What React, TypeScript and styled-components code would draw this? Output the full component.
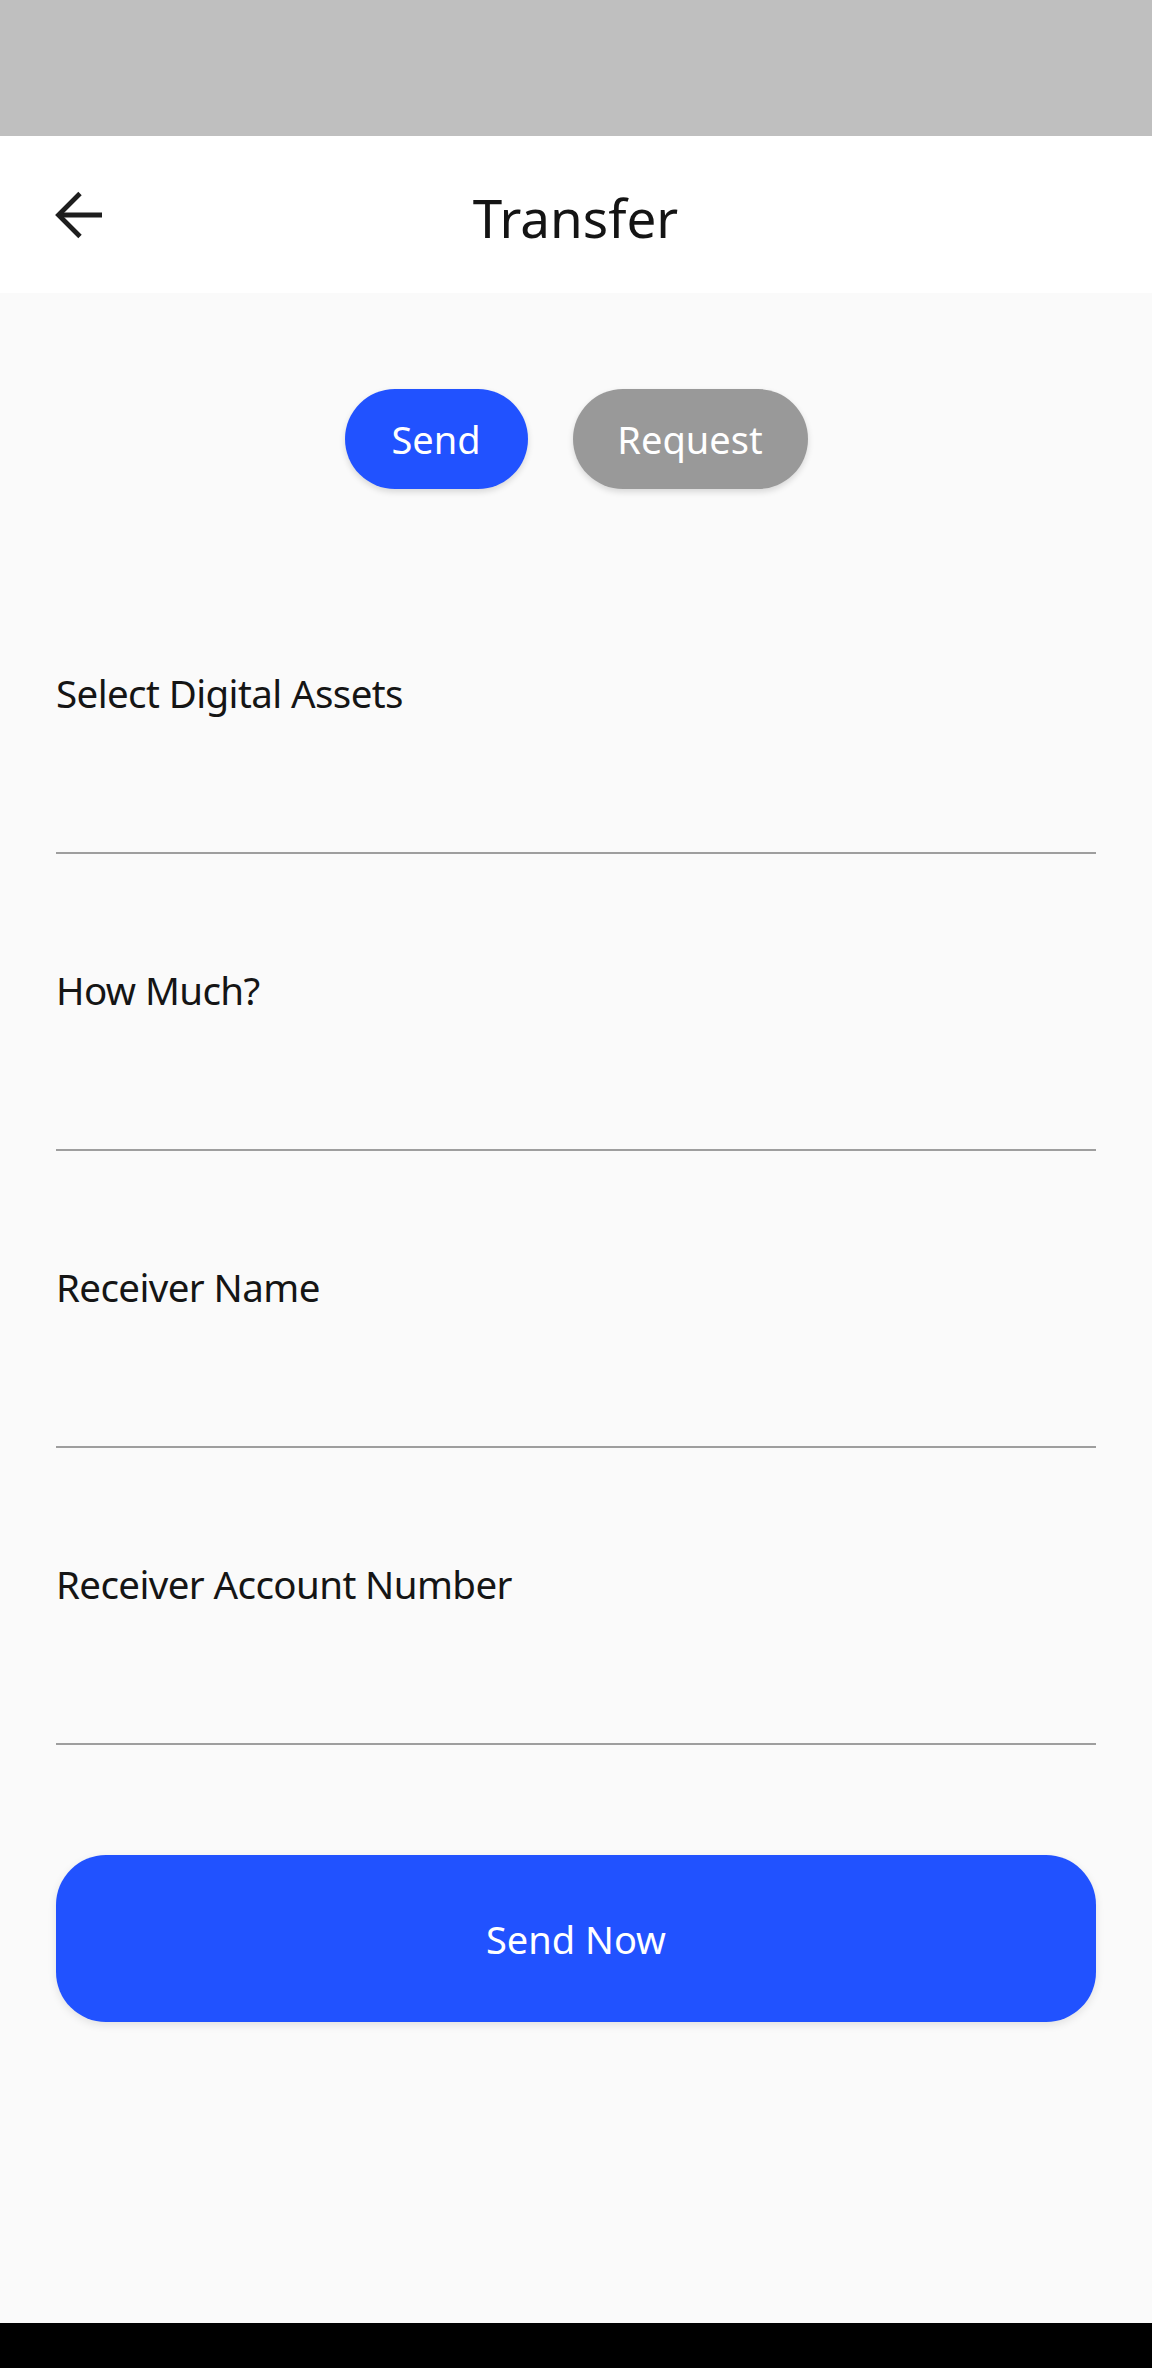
import React from "react";
import styled, { createGlobalStyle } from "styled-components";

const GlobalStyle = createGlobalStyle`
  html, body {
    margin: 0;
    padding: 0;
    background: #fafafa;
    font-family: "Noto Sans", "Open Sans", sans-serif;
  }
  * { box-sizing: border-box; }
`;

const Screen = styled.div`
  width: 1152px;
  height: 2368px;
  display: flex;
  flex-direction: column;
  background: #fafafa;
`;

const StatusBar = styled.div`
  height: 136px;
  flex-shrink: 0;
  background: #bfbfbf;
`;

const Header = styled.header`
  height: 157px;
  flex-shrink: 0;
  background: #ffffff;
  display: grid;
  grid-template-columns: 1fr auto 1fr;
  align-items: center;
  padding: 0 56px 0 55px;
`;

const BackButton = styled.button`
  justify-self: start;
  width: 48px;
  height: 48px;
  padding: 0;
  border: none;
  background: transparent;
  display: flex;
  align-items: center;
  justify-content: center;
`;

const Title = styled.h1`
  margin: 0;
  font-size: 53px;
  font-weight: 400;
  line-height: 60px;
  color: #141414;
  padding-top: 6px;
`;

const Main = styled.main`
  flex: 1;
  display: flex;
  flex-direction: column;
  padding: 96px 56px 0;
`;

const Tabs = styled.div`
  display: flex;
  justify-content: center;
  gap: 45px;
  margin-bottom: 184px;
`;

const Pill = styled.button<{ $active?: boolean; $width: number }>`
  width: ${(p) => p.$width}px;
  height: 100px;
  border: none;
  border-radius: 50px;
  background: ${(p) => (p.$active ? "#2152ff" : "#999999")};
  color: #ffffff;
  font-family: "Noto Sans", "Open Sans", sans-serif;
  font-size: 38px;
  line-height: 40px;
  padding: 0;
  box-shadow: 0 3px 6px rgba(0, 0, 0, 0.14);
`;

const Field = styled.div`
  display: flex;
  flex-direction: column;
  height: 181px;
  border-bottom: 2px solid #9e9e9e;
  & + & {
    margin-top: 116px;
  }
`;

const Label = styled.label`
  font-size: 38.5px;
  letter-spacing: -0.6px;
  line-height: 40px;
  color: #151515;
`;

const SubmitButton = styled.button`
  margin-top: 110px;
  height: 167px;
  width: 100%;
  border: none;
  border-radius: 50px;
  background: #2152ff;
  color: #ffffff;
  font-family: "Noto Sans", "Open Sans", sans-serif;
  font-size: 38px;
  line-height: 40px;
  box-shadow: 0 3px 8px rgba(0, 0, 0, 0.1);
`;

const NavBar = styled.div`
  height: 45px;
  flex-shrink: 0;
  background: #000000;
`;

const BackArrow = () => (
  <svg width="48" height="48" viewBox="0 0 48 48" fill="none">
    <path d="M3 24 H47" stroke="#1e1e1e" strokeWidth="4.8" />
    <path d="M25 2.5 L3.5 24 L25 45.5" stroke="#1e1e1e" strokeWidth="4.8" strokeLinejoin="miter" />
  </svg>
);

const fields = [
  "Select Digital Assets",
  "How Much?",
  "Receiver Name",
  "Receiver Account Number",
];

export default function App() {
  return (
    <>
      <GlobalStyle />
      <Screen>
        <StatusBar />
        <Header>
          <BackButton aria-label="Back">
            <BackArrow />
          </BackButton>
          <Title>Transfer</Title>
          <span />
        </Header>
        <Main>
          <Tabs>
            <Pill $active $width={183}>Send</Pill>
            <Pill $width={235}>Request</Pill>
          </Tabs>
          {fields.map((f) => (
            <Field key={f}>
              <Label>{f}</Label>
            </Field>
          ))}
          <SubmitButton>Send Now</SubmitButton>
        </Main>
        <NavBar />
      </Screen>
    </>
  );
}
